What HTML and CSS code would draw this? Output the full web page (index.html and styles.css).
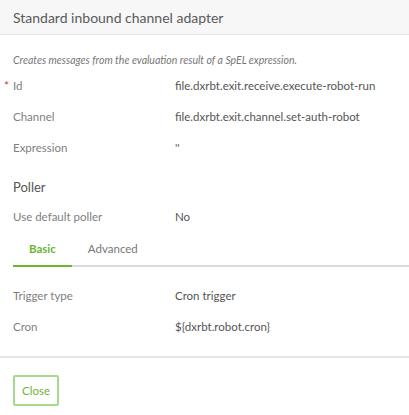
FILE: index.html
```html
<!DOCTYPE html>
<html>
<head>
<meta charset="utf-8">
<link rel="stylesheet" href="styles.css">
</head>
<body>
<div class="dialog">
  <div class="header">Standard inbound channel adapter</div>
  <div class="content">
    <p class="desc">Creates messages from the evaluation result of a SpEL expression.</p>
    <div class="row"><span class="label required">Id</span><span class="value">file.dxrbt.exit.receive.execute-robot-run</span></div>
    <div class="row"><span class="label">Channel</span><span class="value">file.dxrbt.exit.channel.set-auth-robot</span></div>
    <div class="row"><span class="label">Expression</span><span class="value">''</span></div>
    <div class="section">Poller</div>
    <div class="row"><span class="label">Use default poller</span><span class="value">No</span></div>
    <div class="tabs">
      <div class="tab active">Basic</div>
      <div class="tab">Advanced</div>
    </div>
    <div class="tabpanel">
      <div class="row"><span class="label">Trigger type</span><span class="value">Cron trigger</span></div>
      <div class="row"><span class="label">Cron</span><span class="value">${dxrbt.robot.cron}</span></div>
    </div>
  </div>
  <div class="footer">
    <button class="btn">Close</button>
  </div>
</div>
</body>
</html>
```
FILE: styles.css
```css
* { box-sizing: border-box; }
html, body { margin: 0; padding: 0; background: #fff; }
body { font-family: Lato, "Open Sans", sans-serif; color: #555; width: 409px; height: 415px; overflow: hidden; }
.dialog { display: flex; flex-direction: column; }
.header {
  height: 35px;
  background: #f7f7f7;
  border-bottom: 1px solid #e4e4e4;
  padding: 0 13px;
  display: flex;
  align-items: center;
  font-size: 14px;
  color: #5a5a5a;
}
.content { padding: 0 0 0 13px; }
.desc {
  margin: 0;
  height: 35px;
  display: flex;
  align-items: center;
  padding-top: 14px;
  font-size: 10.5px;
  font-style: italic;
  color: #777;
}
.row {
  display: grid;
  grid-template-columns: 162px 1fr;
  height: 31px;
  align-items: center;
  font-size: 11.5px;
}
.label { color: #808080; position: relative; }
.label.required::before {
  content: "*";
  position: absolute;
  left: -9px;
  top: -1px;
  color: #d9363e;
  font-size: 12px;
}
.value { color: #555; }
.section {
  height: 38px;
  padding-top: 9px;
  display: flex;
  align-items: center;
  font-size: 13px;
  color: #555;
}
.tabs {
  display: flex;
  height: 35px;
  padding-bottom: 1px;
  border-bottom: 2px solid #d9d9d9;
}
.tab {
  padding: 0 16px;
  display: flex;
  align-items: center;
  font-size: 11.5px;
  color: #777;
  margin-bottom: -3px;
  border-bottom: 2px solid transparent;
}
.tab.active {
  color: #6cb52d;
  font-weight: bold;
  border-bottom-color: #6cb52d;
}
.tabpanel { padding-top: 13px; padding-bottom: 14px; }
.footer {
  border-top: 2px solid #e6e6e6;
  padding: 17px 13px;
}
.btn {
  font-family: inherit;
  font-size: 11.5px;
  color: #6cb52d;
  background: #fff;
  border: 2px solid #a6d98c;
  border-radius: 2px;
  width: 46px;
  height: 31px;
  padding: 0;
}
```
